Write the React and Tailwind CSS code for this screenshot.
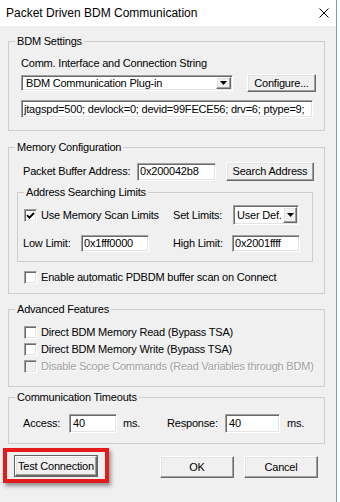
import React from "react";

const sunken =
  "border border-t-[#a0a0a0] border-l-[#a0a0a0] border-r-white border-b-white shadow-[inset_1px_1px_0_#696969,inset_-1px_-1px_0_#e3e3e3]";
const raised =
  "border border-t-white border-l-white border-r-[#696969] border-b-[#696969] shadow-[inset_-1px_-1px_0_#a0a0a0,inset_1px_1px_0_#e3e3e3]";

function Arrow() {
  return (
    <svg width="7" height="4" viewBox="0 0 7 4">
      <path d="M0 0 H7 L3.5 4 Z" fill="#000" />
    </svg>
  );
}

function Check({ checked, disabled }) {
  return (
    <div
      className={`w-[13px] h-[13px] shrink-0 flex items-center justify-center ${sunken} ${
        disabled ? "bg-[#f0f0f0]" : "bg-white"
      }`}
    >
      {checked && (
        <svg width="9" height="9" viewBox="0 0 9 9">
          <path d="M1 4.2 L3.4 6.6 L8 2" fill="none" stroke="#000" strokeWidth="1.9" />
        </svg>
      )}
    </div>
  );
}

function Group({ title, className, children }) {
  return (
    <fieldset className={`border border-[#cdcdcd] ${className}`}>
      <legend className="ml-[6px] px-[2px] leading-[13px]">{title}</legend>
      {children}
    </fieldset>
  );
}

function Row({ children, disabled }) {
  return (
    <div className="h-[17px] flex items-center">
      <Check disabled={disabled} />
      <span
        className={`ml-[4px] whitespace-nowrap ${
          disabled ? "text-[#a0a0a0] [text-shadow:1px_1px_0_#fff]" : ""
        }`}
      >
        {children}
      </span>
    </div>
  );
}

export default function App() {
  return (
    <div className="w-[340px] h-[502px] bg-white flex font-['Liberation_Sans',Arial,sans-serif] text-[11px] text-black tracking-[-0.2px] leading-[13px]">
      <div className="w-[337px] h-full border-r border-[#6a9fd8] flex flex-col">
        {/* title bar */}
        <div className="h-[26px] bg-white flex items-center justify-between shrink-0">
          <span className="pl-[6px] text-[12px] tracking-normal">
            Packet Driven BDM Communication
          </span>
          <svg className="mr-[7px]" width="10" height="10" viewBox="0 0 10 10">
            <path d="M0.5 0.5 L9.5 9.5 M9.5 0.5 L0.5 9.5" stroke="#000" strokeWidth="1" />
          </svg>
        </div>

        {/* body */}
        <div className="flex-1 bg-[#f0f0f0] flex flex-col">
          {/* BDM Settings */}
          <Group title="BDM Settings" className="ml-[8px] mt-[9px] w-[317px]">
            <div className="pl-[12px] pb-[12px]">
              <div className="mt-[9px] h-[13px] whitespace-nowrap">
                Comm. Interface and Connection String
              </div>
              <div className="mt-[4px] h-[18px] flex items-center">
                <div className={`w-[212px] h-[16px] bg-white p-[1px] flex ${sunken}`}>
                  <div className="flex-1 pl-[3px] flex items-center whitespace-nowrap overflow-hidden">
                    BDM Communication Plug-in
                  </div>
                  <div className={`w-[15px] bg-[#f0f0f0] flex items-center justify-center ${raised}`}>
                    <Arrow />
                  </div>
                </div>
                <div className={`ml-[14px] w-[69px] h-[18px] bg-[#f0f0f0] flex items-center justify-center ${raised}`}>
                  Configure...
                </div>
              </div>
              <div className={`mt-[8px] w-[292px] h-[18px] bg-white pl-[2px] flex items-center whitespace-nowrap overflow-hidden ${sunken}`}>
                jtagspd=500; devlock=0; devid=99FECE56; drv=6; ptype=9;
              </div>
            </div>
          </Group>

          {/* Memory Configuration */}
          <Group title="Memory Configuration" className="ml-[8px] mt-[10px] w-[317px]">
            <div className="pb-[9px]">
              <div className="mt-[8px] h-[19px] flex items-center pl-[14px]">
                <span className="w-[114px] whitespace-nowrap">Packet Buffer Address:</span>
                <div className={`w-[79px] h-[18px] bg-white pl-[2px] flex items-center ${sunken}`}>
                  0x200042b8
                </div>
                <div className={`ml-[10px] w-[88px] h-[19px] bg-[#f0f0f0] flex items-center justify-center ${raised}`}>
                  Search Address
                </div>
              </div>

              <Group title="Address Searching Limits" className="ml-[8px] mt-[5px] w-[296px]">
                <div className="pl-[6px] pb-[9px]">
                  <div className="mt-[6px] h-[20px] flex items-center">
                    <div className="w-[149px] flex items-center">
                      <Check checked />
                      <span className="ml-[4px] whitespace-nowrap">Use Memory Scan Limits</span>
                    </div>
                    <span className="w-[60px] whitespace-nowrap">Set Limits:</span>
                    <div className={`w-[66px] h-[20px] bg-white p-[1px] flex ${sunken}`}>
                      <div className="flex-1 pl-[2px] flex items-center whitespace-nowrap overflow-hidden">
                        User Def.
                      </div>
                      <div className={`w-[14px] bg-[#f0f0f0] flex items-center justify-center ${raised}`}>
                        <Arrow />
                      </div>
                    </div>
                  </div>
                  <div className="mt-[10px] h-[17px] flex items-center">
                    <span className="-ml-[1px] w-[58px] whitespace-nowrap">Low Limit:</span>
                    <div className={`w-[68px] h-[17px] bg-white pl-[2px] flex items-center ${sunken}`}>
                      0x1fff0000
                    </div>
                    <span className="ml-[24px] w-[59px] whitespace-nowrap">High Limit:</span>
                    <div className={`w-[68px] h-[17px] bg-white pl-[2px] flex items-center ${sunken}`}>
                      0x2001ffff
                    </div>
                  </div>
                </div>
              </Group>

              <div className="mt-[9px] pl-[15px]">
                <div className="h-[13px] flex items-center">
                  <Check />
                  <span className="ml-[4px] whitespace-nowrap">
                    Enable automatic PDBDM buffer scan on Connect
                  </span>
                </div>
              </div>
            </div>
          </Group>

          {/* Advanced Features */}
          <Group title="Advanced Features" className="ml-[8px] mt-[9px] w-[317px]">
            <div className="pt-[8px] pb-[11px] pl-[15px]">
              <Row>Direct BDM Memory Read (Bypass TSA)</Row>
              <Row>Direct BDM Memory Write (Bypass TSA)</Row>
              <Row disabled>Disable Scope Commands (Read Variables through BDM)</Row>
            </div>
          </Group>

          {/* Communication Timeouts */}
          <Group title="Communication Timeouts" className="ml-[8px] mt-[4px] w-[317px]">
            <div className="mt-[10px] pb-[10px] pl-[14px]">
              <div className="h-[19px] flex items-center">
                <span className="w-[46px]">Access:</span>
                <div className={`w-[48px] h-[19px] bg-white pl-[3px] flex items-center ${sunken}`}>40</div>
                <span className="ml-[6px] w-[44px]">ms.</span>
                <span className="w-[58px]">Response:</span>
                <div className={`w-[55px] h-[19px] bg-white pl-[3px] flex items-center ${sunken}`}>40</div>
                <span className="ml-[7px]">ms.</span>
              </div>
            </div>
          </Group>

          {/* Buttons */}
          <div className="mt-[4px] flex items-start">
            <div className="ml-[3px] border-4 border-[#e31b1b] pl-[7px] pr-[7px] pt-[3px] pb-[2px] shadow-[2px_3px_4px_rgba(0,0,0,0.4)]">
              <div className="w-[84px] h-[22px] border border-[#646464] flex">
                <div className={`flex-1 bg-[#f0f0f0] flex items-center justify-center whitespace-nowrap ${raised}`}>
                  Test Connection
                </div>
              </div>
            </div>
            <div className={`ml-[51px] mt-[8px] w-[74px] h-[22px] bg-[#f0f0f0] flex items-center justify-center ${raised}`}>
              OK
            </div>
            <div className={`ml-[10px] mt-[8px] w-[74px] h-[22px] bg-[#f0f0f0] flex items-center justify-center ${raised}`}>
              Cancel
            </div>
          </div>
        </div>
      </div>
    </div>
  );
}
